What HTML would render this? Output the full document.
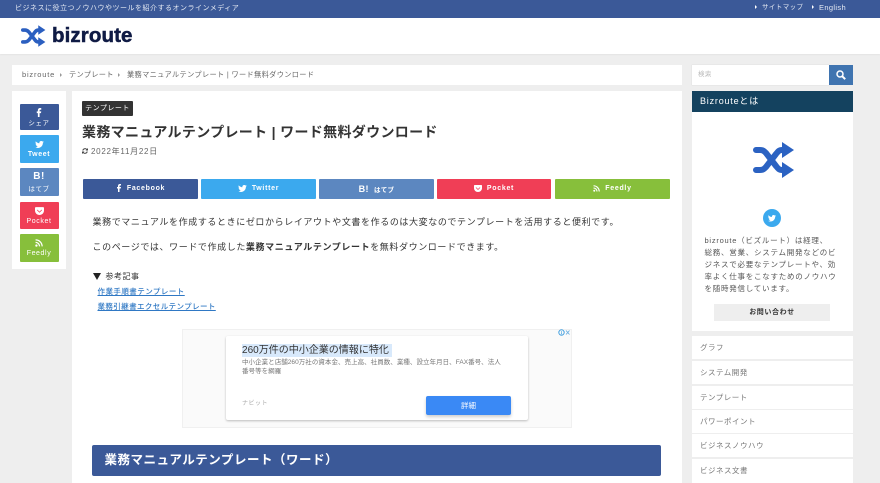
<!DOCTYPE html>
<html lang="ja"><head><meta charset="utf-8"><title>業務マニュアルテンプレート</title>
<style>
html,body{margin:0;padding:0}
body{width:880px;height:483px;overflow:hidden;position:relative;background:#eee;font-family:"Liberation Sans","Noto Sans CJK JP",sans-serif;color:#333}
.a{position:absolute;white-space:nowrap}
.w{position:absolute;background:#fff}
.btn{position:absolute;top:179px;height:20px;color:#fff;font-size:7px;font-weight:bold;letter-spacing:.7px;line-height:20.500px;text-align:center;border-radius:1px}
.btn svg{vertical-align:-1.500px;margin-right:5px}
.s{position:absolute;left:19.500px;width:39px;color:#fff;text-align:center;font-size:7px;letter-spacing:.6px;border-radius:1px}
.s svg,.s b{position:absolute;left:0;right:0;margin:auto}
.s span{position:absolute;left:0;right:0;font-weight:bold}
.p{font-size:9px;letter-spacing:.6px;color:#333;line-height:14px}
.l{position:absolute;left:692px;width:161px;height:23px;background:#fff;font-size:7.500px;letter-spacing:.5px;color:#777;line-height:23px;text-indent:8px}
</style></head><body>
<svg width="0" height="0" style="position:absolute"><defs>
<symbol id="sh" viewBox="0 0 42 36"><path d="M3 8h4c3 0 4 1 6 3l10 13c2 2.500 3 4 6 4h3M3 28h4c3 0 4-1 6-3l10-13c2-2.500 3-4 6-4h3" fill="none" stroke="currentColor" stroke-width="6" stroke-linecap="round"/><path d="M29 0l12 8-12 8zM29 20l12 8-12 8z" fill="currentColor"/></symbol>
<symbol id="f" viewBox="0 0 10 16"><path d="M3 16V9H1V6h2V4c0-2.500 1.500-4 3.700-4H9v3H7.500C6.500 3 6 3.500 6 4.500V6h3L8.500 9H6v7z" fill="currentColor"/></symbol>
<symbol id="t" viewBox="0 0 16 13"><path d="M16 1.500c-.6.3-1.200.4-1.900.5.700-.4 1.200-1 1.400-1.800-.6.400-1.300.6-2 .8C12.900.3 12 0 11 0 9.200 0 7.700 1.500 7.700 3.300c0 .3 0 .5.100.8C5 3.900 2.600 2.600 1.100.6.800 1.100.6 1.700.6 2.300c0 1.100.6 2.100 1.500 2.700-.5 0-1-.2-1.500-.4 0 1.600 1.100 2.900 2.600 3.200-.5.100-1 .2-1.500.1.400 1.300 1.600 2.200 3.100 2.300C3.200 11.300 1.600 11.900 0 11.700 1.500 12.500 3.200 13 5 13c6 0 9.300-5 9.300-9.300v-.4c.7-.5 1.200-1.100 1.700-1.800z" fill="currentColor"/></symbol>
<symbol id="po" viewBox="0 0 16 14"><path fill-rule="evenodd" d="M1.500 0h13c.8 0 1.500.7 1.500 1.500V6c0 4.500-3.600 8-8 8s-8-3.500-8-8V1.500C0 .7.700 0 1.500 0zM4.300 4.500 3.400 5.500 8 10l4.600-4.500-.9-1L8 8z" fill="currentColor"/></symbol>
<symbol id="r" viewBox="0 0 14 14"><circle cx="2.500" cy="11.500" r="2" fill="currentColor"/><path d="M1 6a7 7 0 0 1 7 7M1 1.500A11.500 11.500 0 0 1 12.500 13" fill="none" stroke="currentColor" stroke-width="2.200"/></symbol>
</defs></svg>

<!-- top bar -->
<div class="a" style="left:0;top:0;width:880px;height:18px;background:#3b5998"></div>
<div class="a" style="left:15px;top:2px;font-size:7px;letter-spacing:.5px;line-height:13px;color:#e4e9f3">ビジネスに役立つノウハウやツールを紹介するオンラインメディア</div>
<div class="a" style="left:755px;top:5px;width:0;height:0;border-left:2.500px solid #fff;border-top:2.500px solid transparent;border-bottom:2.500px solid transparent"></div>
<div class="a" style="left:762px;top:1px;font-size:6.500px;letter-spacing:.4px;line-height:13px;color:#e4e9f3">サイトマップ</div>
<div class="a" style="left:812px;top:5px;width:0;height:0;border-left:2.500px solid #fff;border-top:2.500px solid transparent;border-bottom:2.500px solid transparent"></div>
<div class="a" style="left:819px;top:1px;font-size:7.500px;letter-spacing:.35px;line-height:13px;color:#e4e9f3">English</div>

<!-- header -->
<div class="w" style="left:0;top:18px;width:880px;height:36px;box-shadow:0 1px 1px #e4e4e4"></div>
<svg class="a" style="left:21px;top:25px;color:#2b5fc0" width="25" height="22"><use href="#sh"/></svg>
<div class="a" style="left:52px;top:24px;font-size:20.500px;font-weight:bold;line-height:24px;color:#0f1a44;letter-spacing:.1px;-webkit-text-stroke:.5px #0f1a44">bizroute</div>

<!-- breadcrumb -->
<div class="w" style="left:12px;top:65px;width:670px;height:20px"></div>
<div class="a" style="left:22px;top:68px;font-size:7.500px;letter-spacing:.8px;line-height:13px;color:#666">bizroute</div>
<div class="a" style="left:60px;top:72.500px;border-left:2.500px solid #999;border-top:2px solid transparent;border-bottom:2px solid transparent"></div>
<div class="a" style="left:69px;top:68px;font-size:7.200px;letter-spacing:.3px;line-height:13px;color:#666">テンプレート</div>
<div class="a" style="left:118px;top:72.500px;border-left:2.500px solid #999;border-top:2px solid transparent;border-bottom:2px solid transparent"></div>
<div class="a" style="left:127px;top:68px;font-size:7.200px;letter-spacing:.35px;line-height:13px;color:#666">業務マニュアルテンプレート | ワード無料ダウンロード</div>

<!-- left share -->
<div class="w" style="left:12px;top:91px;width:54px;height:178px"></div>
<div class="s" style="top:103.500px;height:26.500px;background:#3b5998"><svg style="top:4px;color:#fff" width="6" height="9"><use href="#f"/></svg><span style="top:15px;line-height:9px;font-size:6.500px;font-weight:normal">シェア</span></div>
<div class="s" style="top:135px;height:27.500px;background:#3ba9ee"><svg style="top:6px;color:#fff" width="9" height="7"><use href="#t"/></svg><span style="top:15px;line-height:9px;font-size:7px">Tweet</span></div>
<div class="s" style="top:168px;height:28px;background:#5c87c0"><b style="top:3px;font-size:10px;line-height:12px;letter-spacing:.5px">B!</b><span style="top:17px;line-height:9px;font-size:6.500px;font-weight:normal">はてブ</span></div>
<div class="s" style="top:201.500px;height:27.500px;background:#f03e56"><svg style="top:5px;color:#fff" width="9" height="8"><use href="#po"/></svg><span style="top:15px;line-height:9px;font-size:7px;font-weight:normal">Pocket</span></div>
<div class="s" style="top:234px;height:27.500px;background:#87bf3b"><svg style="top:5px;color:#fff" width="8" height="8"><use href="#r"/></svg><span style="top:15px;line-height:9px;font-size:7px;font-weight:normal">Feedly</span></div>

<!-- main -->
<div class="w" style="left:72px;top:91px;width:610px;height:392px"></div>
<div class="a" style="left:82px;top:101px;width:51px;height:15px;background:#333;color:#fff;font-size:7px;letter-spacing:.5px;line-height:15px;text-align:center;border-radius:1px">テンプレート</div>
<div class="a" style="left:82px;top:122px;font-size:14px;font-weight:bold;letter-spacing:.33px;line-height:20px;color:#333">業務マニュアルテンプレート | ワード無料ダウンロード</div>
<svg class="a" style="left:82px;top:148px" width="6" height="6" viewBox="0 0 12 12"><path d="M1.500 5A4.700 4.700 0 0 1 10 3.500M10.500 7A4.700 4.700 0 0 1 2 8.500" fill="none" stroke="#444" stroke-width="2"/><path d="M12 0v5H7zM0 12V7h5z" fill="#444"/></svg>
<div class="a" style="left:91px;top:145px;font-size:8px;letter-spacing:.72px;line-height:13px;color:#666">2022年11月22日</div>

<div class="btn" style="left:83px;width:115px;background:#3b5998"><svg width="6" height="8" style="color:#fff"><use href="#f"/></svg>Facebook</div>
<div class="btn" style="left:201px;width:115px;background:#3ba9ee"><svg width="9" height="7" style="color:#fff"><use href="#t"/></svg>Twitter</div>
<div class="btn" style="left:319px;width:115px;background:#5c87c0"><b style="font-size:9px;margin-right:5px;letter-spacing:.4px">B!</b><span style="font-size:6.500px;letter-spacing:.3px">はてブ</span></div>
<div class="btn" style="left:437px;width:114px;background:#f03e56"><svg width="8" height="7" style="color:#fff"><use href="#po"/></svg>Pocket</div>
<div class="btn" style="left:555px;width:115px;background:#87bf3b"><svg width="7" height="7" style="color:#fff"><use href="#r"/></svg>Feedly</div>

<div class="a p" style="left:92.500px;top:214.500px">業務でマニュアルを作成するときにゼロからレイアウトや文書を作るのは大変なのでテンプレートを活用すると便利です。</div>
<div class="a p" style="left:92.500px;top:239.500px">このページでは、ワードで作成した<b>業務マニュアルテンプレート</b>を無料ダウンロードできます。</div>
<div class="a" style="left:92.500px;top:270px;font-size:8px;letter-spacing:.5px;line-height:13px;color:#333"><span style="display:inline-block;width:0;height:0;border-left:4px solid transparent;border-right:4px solid transparent;border-top:7px solid #222;margin-right:5px;vertical-align:-.5px"></span>参考記事</div>
<div class="a" style="left:97.500px;top:285px;font-size:7.500px;letter-spacing:.45px;line-height:13px;color:#2f78c4;text-decoration:underline;font-weight:500">作業手順書テンプレート</div>
<div class="a" style="left:97.500px;top:300px;font-size:7.500px;letter-spacing:.4px;line-height:13px;color:#2f78c4;text-decoration:underline;font-weight:500">業務引継書エクセルテンプレート</div>

<!-- ad -->
<div class="a" style="left:182px;top:329px;width:388px;height:97px;background:#fafafa;border:1px solid #f0f0f0"></div>
<div class="a" style="left:226px;top:336px;width:302px;height:84px;background:#fff;border-radius:2px;box-shadow:0 1px 2px rgba(0,0,0,.25)"></div>
<div class="a" style="left:242px;top:344px;width:150px;height:13px;background:#d8e9fb"></div>
<div class="a" style="left:242px;top:343px;font-size:10px;line-height:15px;color:#333;letter-spacing:.01px">260万件の中小企業の情報に特化</div>
<div class="a" style="left:242px;top:358px;font-size:6.500px;line-height:9px;color:#777;letter-spacing:.04px">中小企業と店舗260万社の資本金、売上高、社員数、業種、設立年月日、FAX番号、法人<br>番号等を網羅</div>
<div class="a" style="left:242px;top:400px;font-size:6px;letter-spacing:.5px;line-height:9px;color:#aaa">ナビット</div>
<div class="a" style="left:426px;top:396px;width:85px;height:19px;background:#3a89f5;border-radius:2px;color:#fff;font-size:7.500px;line-height:19px;text-align:center;box-shadow:0 2px 3px rgba(0,0,0,.2)">詳細</div>
<svg class="a" style="left:558px;top:329px" width="12" height="7"><circle cx="3.500" cy="3.500" r="2.700" fill="none" stroke="#4aa3e0"/><path d="M3.500 2v.7M3.500 3.200v2" stroke="#4aa3e0" stroke-width=".8"/><path d="M8 1.500l3.500 4M11.500 1.500 8 5.500" stroke="#6aaee0" stroke-width=".9"/></svg>

<!-- h2 -->
<div class="a" style="left:92px;top:445px;width:569px;height:30.500px;background:#3b5998;border-radius:2px;color:#fff;font-size:12.500px;font-weight:bold;letter-spacing:.52px;line-height:31px;text-indent:12.500px">業務マニュアルテンプレート（ワード）</div>

<!-- sidebar -->
<div class="w" style="left:692px;top:65px;width:137px;height:20px;box-shadow:0 0 1px #ccc"></div>
<div class="a" style="left:698px;top:69px;font-size:6.500px;line-height:12px;color:#bbb;letter-spacing:.4px">検索</div>
<div class="a" style="left:829px;top:65px;width:24px;height:20px;background:#3f74b0"></div>
<svg class="a" style="left:836px;top:70px" width="10" height="10" viewBox="0 0 10 10"><circle cx="4" cy="4" r="3" fill="none" stroke="#fff" stroke-width="1.500"/><path d="M6.300 6.300 9.200 9.200" stroke="#fff" stroke-width="2"/></svg>

<div class="a" style="left:692px;top:91px;width:161px;height:21px;background:#14425f;color:#fff;font-size:9px;letter-spacing:.8px;line-height:20px;text-indent:8px">Bizrouteとは</div>
<div class="w" style="left:692px;top:112px;width:161px;height:219px"></div>
<svg class="a" style="left:753px;top:142px;color:#2b62c2" width="42" height="36"><use href="#sh"/></svg>
<div class="a" style="left:763px;top:209px;width:18px;height:18px;border-radius:50%;background:#3ba9ee"></div>
<svg class="a" style="left:768px;top:215px;color:#fff" width="8" height="6.500"><use href="#t"/></svg>
<div class="a" style="left:704.500px;top:235px;font-size:7.500px;letter-spacing:.75px;line-height:12px;color:#555">bizroute（ビズルート）は経理、<br>総務、営業、システム開発などのビ<br>ジネスで必要なテンプレートや、効<br>率よく仕事をこなすためのノウハウ<br>を随時発信しています。</div>
<div class="a" style="left:714px;top:304px;width:116px;height:17px;background:#eee;color:#333;font-size:7px;font-weight:bold;letter-spacing:.6px;line-height:17px;text-align:center">お問い合わせ</div>

<div class="l" style="top:336px">グラフ</div>
<div class="l" style="top:361px">システム開発</div>
<div class="l" style="top:385.500px">テンプレート</div>
<div class="l" style="top:410px">パワーポイント</div>
<div class="l" style="top:434px">ビジネスノウハウ</div>
<div class="l" style="top:458.500px;height:24.500px">ビジネス文書</div>
</body></html>
